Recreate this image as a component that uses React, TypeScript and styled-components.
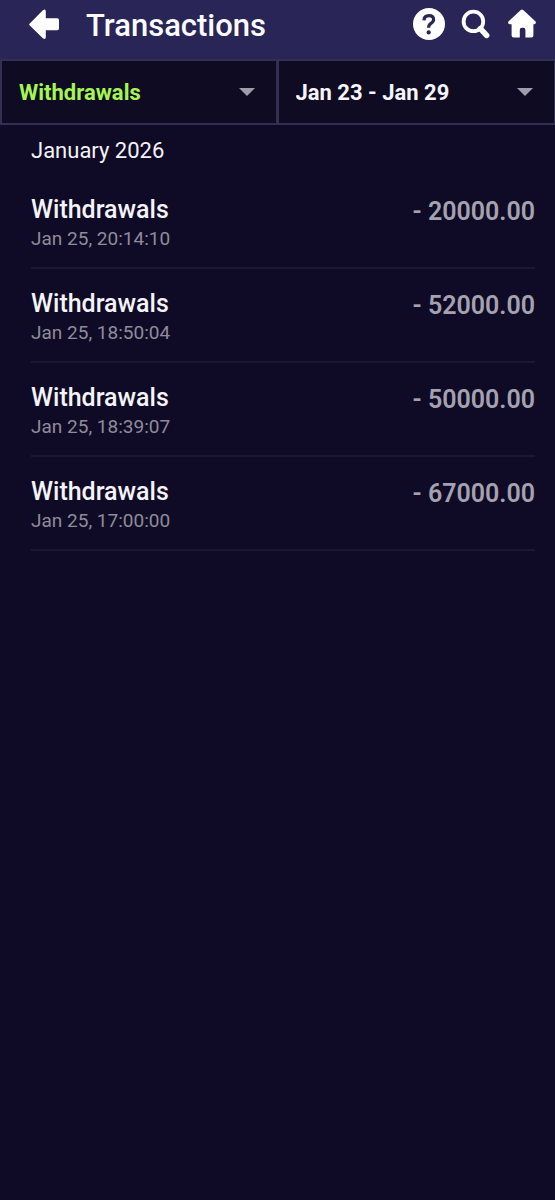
import React from "react";
import styled, { createGlobalStyle } from "styled-components";

const GlobalStyle = createGlobalStyle`
  * { box-sizing: border-box; }
  body {
    margin: 0;
    background: #0f0b26;
    color: #f4f3f8;
    font-family: Roboto, "Liberation Sans", sans-serif;
  }
`;

const Page = styled.div`
  min-height: 100vh;
  background: #0f0b26;
`;

const Header = styled.header`
  display: flex;
  align-items: center;
  height: 59px;
  padding: 0 18px 11px 28px;
  background: #2a2557;
`;

const Title = styled.h1`
  flex: 1;
  margin: 0 0 0 26px;
  padding-top: 3px;
  font-size: 31px;
  line-height: 36px;
  font-weight: 500;
  color: #fcfbff;
`;

const Actions = styled.nav`
  display: flex;
  align-items: center;
  gap: 16px;
`;

const IconButton = styled.button`
  display: flex;
  padding: 0;
  border: 0;
  background: none;
  color: #fff;
  cursor: pointer;
`;

const Filters = styled.div`
  display: grid;
  grid-template-columns: 1fr 1fr;
`;

const FilterBox = styled.label`
  display: grid;
  align-items: center;
  height: 66px;
  border: 2px solid #332f52;
  background: #0f0b22;

  & + & {
    border-left-width: 1px;
    border-right-width: 1px;
  }
`;

const FilterSelect = styled.select<{ $active?: boolean }>`
  grid-area: 1 / 1;
  width: 100%;
  height: 100%;
  padding: 2px 48px 0 17px;
  border: 0;
  appearance: none;
  background: transparent;
  color: ${(p) => (p.$active ? "#a5f553" : "#f6f5fb")};
  font: 700 22px/26px Roboto, "Liberation Sans", sans-serif;
`;

const Caret = styled.svg`
  grid-area: 1 / 1;
  justify-self: end;
  margin-right: 20px;
  pointer-events: none;
`;

const Content = styled.main`
  padding: 12px 20px 0 31px;
`;

const Month = styled.h2`
  margin: 0 0 10px;
  font-size: 22px;
  line-height: 28px;
  font-weight: 400;
`;

const List = styled.ul`
  margin: 0;
  padding: 0;
  list-style: none;
`;

const Row = styled.li`
  display: flex;
  justify-content: space-between;
  align-items: flex-start;
  padding: 20px 0 16px;
  border-bottom: 2px solid #1b182f;
`;

const Kind = styled.div`
  font-size: 25px;
  line-height: 30px;
  font-weight: 500;
`;

const Time = styled.time`
  display: block;
  padding-top: 2px;
  font-size: 19px;
  line-height: 24px;
  color: #8f8c9a;
`;

const Amount = styled.div`
  padding-top: 2px;
  font-size: 25px;
  line-height: 30px;
  font-weight: 600;
  color: #a5a2b0;
`;

const transactions = [
  { time: "Jan 25, 20:14:10", amount: "- 20000.00" },
  { time: "Jan 25, 18:50:04", amount: "- 52000.00" },
  { time: "Jan 25, 18:39:07", amount: "- 50000.00" },
  { time: "Jan 25, 17:00:00", amount: "- 67000.00" },
];

const BackIcon = () => (
  <svg width="32" height="32" viewBox="0 0 32 32" fill="currentColor">
    <path d="M1.8 15.4 L14.6 2.4 Q17.6 .2 17.8 3.4 V10.2 H29.4 Q31 10.4 31 12 V20.4 Q31 22 29.4 22.2 H17.8 V29 Q17.6 32.2 14.6 30 L1.8 17.6 Q.6 16.5 1.8 15.4Z" />
  </svg>
);

const HelpIcon = () => (
  <svg width="32" height="32" viewBox="0 0 32 32">
    <circle cx="16" cy="16" r="16" fill="currentColor" />
    <path d="M11 12.4 Q11.2 7.6 16 7.6 Q20.6 7.6 20.6 11.6 Q20.6 13.8 18 15.4 Q15.6 16.8 15.6 19.8" fill="none" stroke="#2a2557" strokeWidth="3.2" />
    <circle cx="15.7" cy="24.4" r="2.1" fill="#2a2557" />
  </svg>
);

const SearchIcon = () => (
  <svg width="30" height="32" viewBox="0 0 30 32" fill="none" stroke="currentColor">
    <circle cx="12.4" cy="13.4" r="9.8" strokeWidth="3.8" />
    <path d="M19.4 20.6 L25.6 27.4" strokeWidth="5.6" strokeLinecap="round" />
  </svg>
);

const HomeIcon = () => (
  <svg width="30" height="32" viewBox="0 0 30 32" fill="currentColor">
    <path d="M13.8 1.9 Q15 .9 16.2 1.9 L28.6 13.6 Q29.6 16 27.2 16.2 H26.4 V27.4 Q26.4 29.4 24.4 29.4 H18.4 V22 Q18.4 19.8 16.4 19.8 H14.8 Q12.8 19.8 12.8 22 V29.4 H6.6 Q4.6 29.4 4.6 27.4 V16.2 H2.8 Q.4 16 1.4 13.6Z" />
  </svg>
);

interface FilterProps {
  label: string;
  value: string;
  active?: boolean;
}

const Filter = ({ label, value, active }: FilterProps) => (
  <FilterBox>
    <FilterSelect aria-label={label} $active={active} defaultValue={value}>
      <option>{value}</option>
    </FilterSelect>
    <Caret width="18" height="10" viewBox="0 0 18 10" aria-hidden="true">
      <path d="M1 1 H17 L9 9Z" fill="#9f9cac" />
    </Caret>
  </FilterBox>
);

export default function App() {
  return (
    <Page>
      <GlobalStyle />
      <Header>
        <IconButton aria-label="Back"><BackIcon /></IconButton>
        <Title>Transactions</Title>
        <Actions>
          <IconButton aria-label="Help"><HelpIcon /></IconButton>
          <IconButton aria-label="Search"><SearchIcon /></IconButton>
          <IconButton aria-label="Home"><HomeIcon /></IconButton>
        </Actions>
      </Header>
      <Filters>
        <Filter label="Transaction type" value="Withdrawals" active />
        <Filter label="Date range" value="Jan 23 - Jan 29" />
      </Filters>
      <Content>
        <Month>January 2026</Month>
        <List>
          {transactions.map((t) => (
            <Row key={t.time}>
              <div>
                <Kind>Withdrawals</Kind>
                <Time>{t.time}</Time>
              </div>
              <Amount>{t.amount}</Amount>
            </Row>
          ))}
        </List>
      </Content>
    </Page>
  );
}
